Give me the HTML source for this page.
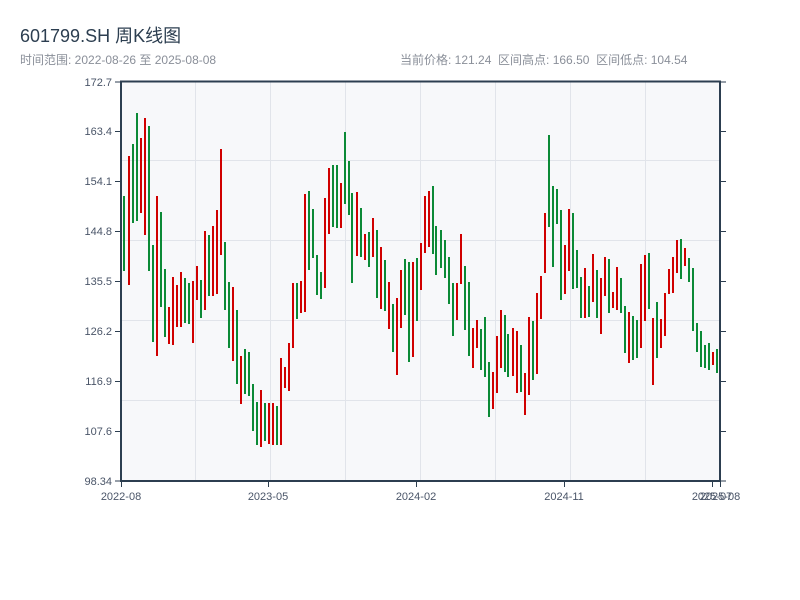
<!DOCTYPE html>
<html><head><meta charset="utf-8"><style>
body{margin:0;width:800px;height:600px;background:#fff;overflow:hidden;font-family:"Liberation Sans","Noto Sans CJK SC",sans-serif}
.t{position:absolute;left:20px;top:22px;font-size:18px;color:#2c3e50}
.s{position:absolute;top:51px;font-size:12px;color:#8a8f99}
svg{position:absolute;left:0;top:0}
</style></head><body>
<div class="t">601799.SH 周K线图</div>
<div class="s" style="left:20px">时间范围: 2022-08-26 至 2025-08-08</div>
<div class="s" style="left:400px">当前价格: 121.24&nbsp;&nbsp;区间高点: 166.50&nbsp;&nbsp;区间低点: 104.54</div>
<svg width="800" height="600" font-family="Liberation Sans, sans-serif" font-size="11" fill="#4a5568">
<rect x="121" y="81" width="599" height="400" fill="#f7f8fa"/>
<g stroke="#e1e4ea" stroke-width="1">
<line x1="195.5" y1="81" x2="195.5" y2="481"/><line x1="270.5" y1="81" x2="270.5" y2="481"/><line x1="345.5" y1="81" x2="345.5" y2="481"/><line x1="420.5" y1="81" x2="420.5" y2="481"/><line x1="495.5" y1="81" x2="495.5" y2="481"/><line x1="570.5" y1="81" x2="570.5" y2="481"/><line x1="645.5" y1="81" x2="645.5" y2="481"/>
<line x1="121" y1="160.5" x2="720" y2="160.5"/><line x1="121" y1="240.5" x2="720" y2="240.5"/><line x1="121" y1="320.5" x2="720" y2="320.5"/><line x1="121" y1="400.5" x2="720" y2="400.5"/>
</g>
<g fill="#0b8a36">
<rect x="123" y="196" width="2" height="75"/><rect x="132" y="144" width="2" height="79"/><rect x="136" y="113" width="2" height="108"/><rect x="148" y="126" width="2" height="145"/><rect x="152" y="245" width="2" height="97"/><rect x="160" y="212" width="2" height="95"/><rect x="164" y="269" width="2" height="68"/><rect x="184" y="278" width="2" height="45"/><rect x="188" y="283" width="2" height="41"/><rect x="200" y="280" width="2" height="38"/><rect x="208" y="235" width="2" height="61"/><rect x="224" y="242" width="2" height="68"/><rect x="228" y="282" width="2" height="66"/><rect x="236" y="310" width="2" height="74"/><rect x="244" y="349" width="2" height="45"/><rect x="248" y="352" width="2" height="44"/><rect x="252" y="384" width="2" height="47"/><rect x="256" y="402" width="2" height="43"/><rect x="264" y="403" width="2" height="38"/><rect x="276" y="406" width="2" height="39"/>
<rect x="296" y="283" width="2" height="36"/><rect x="308" y="191" width="2" height="79"/><rect x="312" y="209" width="2" height="49"/><rect x="316" y="255" width="2" height="40"/><rect x="320" y="272" width="2" height="27"/><rect x="332" y="165" width="2" height="62"/><rect x="336" y="165" width="2" height="63"/><rect x="344" y="132" width="2" height="72"/><rect x="348" y="161" width="2" height="54"/><rect x="351" y="193" width="2" height="90"/><rect x="360" y="208" width="2" height="49"/><rect x="368" y="232" width="2" height="35"/><rect x="376" y="230" width="2" height="68"/><rect x="384" y="260" width="2" height="51"/><rect x="392" y="304" width="2" height="48"/><rect x="404" y="259" width="2" height="56"/><rect x="408" y="262" width="2" height="100"/><rect x="416" y="258" width="2" height="63"/>
<rect x="432" y="186" width="2" height="68"/><rect x="435" y="226" width="2" height="49"/><rect x="440" y="230" width="2" height="38"/><rect x="444" y="240" width="2" height="38"/><rect x="448" y="257" width="2" height="47"/><rect x="452" y="283" width="2" height="53"/><rect x="464" y="266" width="2" height="64"/><rect x="468" y="282" width="2" height="74"/><rect x="480" y="329" width="2" height="41"/><rect x="484" y="317" width="2" height="60"/><rect x="488" y="362" width="2" height="55"/><rect x="504" y="315" width="2" height="57"/><rect x="507" y="334" width="2" height="43"/><rect x="520" y="345" width="2" height="47"/><rect x="532" y="321" width="2" height="59"/><rect x="548" y="135" width="2" height="92"/><rect x="552" y="186" width="2" height="81"/><rect x="556" y="189" width="2" height="35"/><rect x="560" y="210" width="2" height="90"/><rect x="572" y="213" width="2" height="76"/><rect x="576" y="250" width="2" height="38"/>
<rect x="580" y="277" width="2" height="41"/><rect x="588" y="286" width="2" height="31"/><rect x="596" y="270" width="2" height="48"/><rect x="608" y="259" width="2" height="54"/><rect x="620" y="278" width="2" height="35"/><rect x="624" y="306" width="2" height="47"/><rect x="632" y="316" width="2" height="44"/><rect x="636" y="320" width="2" height="38"/><rect x="648" y="253" width="2" height="56"/><rect x="656" y="302" width="2" height="56"/><rect x="680" y="239" width="2" height="40"/><rect x="688" y="258" width="2" height="24"/><rect x="692" y="268" width="2" height="63"/><rect x="696" y="323" width="2" height="29"/><rect x="700" y="331" width="2" height="36"/><rect x="704" y="345" width="2" height="23"/><rect x="708" y="343" width="2" height="27"/><rect x="716" y="349" width="2" height="24"/>
</g>
<g fill="#d00000">
<rect x="128" y="156" width="2" height="129"/><rect x="140" y="138" width="2" height="75"/><rect x="144" y="118" width="2" height="117"/><rect x="156" y="196" width="2" height="160"/><rect x="168" y="307" width="2" height="37"/><rect x="172" y="277" width="2" height="68"/><rect x="176" y="285" width="2" height="42"/><rect x="180" y="272" width="2" height="55"/><rect x="192" y="281" width="2" height="62"/><rect x="196" y="266" width="2" height="34"/><rect x="204" y="231" width="2" height="79"/><rect x="212" y="226" width="2" height="70"/><rect x="216" y="210" width="2" height="84"/><rect x="220" y="149" width="2" height="106"/><rect x="232" y="287" width="2" height="74"/><rect x="240" y="356" width="2" height="48"/><rect x="260" y="390" width="2" height="57"/><rect x="268" y="403" width="2" height="41"/><rect x="272" y="403" width="2" height="42"/><rect x="280" y="358" width="2" height="87"/>
<rect x="284" y="367" width="2" height="21"/><rect x="288" y="343" width="2" height="48"/><rect x="292" y="283" width="2" height="65"/><rect x="300" y="281" width="2" height="32"/><rect x="304" y="194" width="2" height="118"/><rect x="324" y="198" width="2" height="90"/><rect x="328" y="168" width="2" height="66"/><rect x="340" y="183" width="2" height="45"/><rect x="356" y="192" width="2" height="64"/><rect x="364" y="234" width="2" height="26"/><rect x="372" y="218" width="2" height="39"/><rect x="380" y="247" width="2" height="62"/><rect x="388" y="282" width="2" height="47"/><rect x="396" y="298" width="2" height="77"/><rect x="400" y="270" width="2" height="58"/><rect x="412" y="262" width="2" height="95"/><rect x="420" y="243" width="2" height="47"/><rect x="424" y="196" width="2" height="57"/><rect x="428" y="191" width="2" height="56"/>
<rect x="456" y="283" width="2" height="37"/><rect x="460" y="234" width="2" height="50"/><rect x="472" y="328" width="2" height="40"/><rect x="476" y="320" width="2" height="28"/><rect x="492" y="372" width="2" height="37"/><rect x="496" y="336" width="2" height="57"/><rect x="500" y="310" width="2" height="58"/><rect x="512" y="328" width="2" height="48"/><rect x="516" y="331" width="2" height="62"/><rect x="524" y="373" width="2" height="42"/><rect x="528" y="317" width="2" height="78"/><rect x="536" y="293" width="2" height="81"/><rect x="540" y="276" width="2" height="43"/><rect x="544" y="213" width="2" height="60"/><rect x="564" y="245" width="2" height="49"/><rect x="568" y="209" width="2" height="62"/>
<rect x="584" y="268" width="2" height="50"/><rect x="592" y="254" width="2" height="48"/><rect x="600" y="278" width="2" height="56"/><rect x="604" y="257" width="2" height="39"/><rect x="612" y="292" width="2" height="16"/><rect x="616" y="267" width="2" height="43"/><rect x="628" y="312" width="2" height="51"/><rect x="640" y="264" width="2" height="84"/><rect x="644" y="255" width="2" height="66"/><rect x="652" y="318" width="2" height="67"/><rect x="660" y="319" width="2" height="29"/><rect x="664" y="293" width="2" height="43"/><rect x="668" y="269" width="2" height="25"/><rect x="672" y="257" width="2" height="36"/><rect x="676" y="240" width="2" height="33"/><rect x="684" y="248" width="2" height="18"/><rect x="712" y="352" width="2" height="13"/><rect x="719" y="342" width="2" height="32"/>
</g>
<g stroke="#2c3e50" stroke-width="2" fill="none">
<line x1="121" y1="81" x2="121" y2="482"/><line x1="720" y1="81" x2="720" y2="482"/>
<line x1="120" y1="481" x2="721" y2="481"/><line x1="120" y1="81.5" x2="721" y2="81.5"/>
</g>
<g stroke="#2c3e50" stroke-width="1">
<line x1="115" y1="82" x2="121" y2="82"/><line x1="115" y1="131.5" x2="121" y2="131.5"/><line x1="115" y1="181.5" x2="121" y2="181.5"/><line x1="115" y1="231.5" x2="121" y2="231.5"/><line x1="115" y1="281.5" x2="121" y2="281.5"/><line x1="115" y1="331.5" x2="121" y2="331.5"/><line x1="115" y1="381.5" x2="121" y2="381.5"/><line x1="115" y1="431.5" x2="121" y2="431.5"/><line x1="115" y1="481" x2="121" y2="481"/>
<line x1="720" y1="82" x2="726" y2="82"/><line x1="720" y1="131.5" x2="726" y2="131.5"/><line x1="720" y1="181.5" x2="726" y2="181.5"/><line x1="720" y1="231.5" x2="726" y2="231.5"/><line x1="720" y1="281.5" x2="726" y2="281.5"/><line x1="720" y1="331.5" x2="726" y2="331.5"/><line x1="720" y1="381.5" x2="726" y2="381.5"/><line x1="720" y1="431.5" x2="726" y2="431.5"/><line x1="720" y1="481" x2="726" y2="481"/>
<line x1="121.5" y1="481" x2="121.5" y2="487"/><line x1="268.5" y1="481" x2="268.5" y2="487"/><line x1="416.5" y1="481" x2="416.5" y2="487"/><line x1="564.5" y1="481" x2="564.5" y2="487"/><line x1="712.5" y1="481" x2="712.5" y2="487"/><line x1="720.5" y1="481" x2="720.5" y2="487"/>
</g>
<g text-anchor="end">
<text x="112" y="86">172.7</text><text x="112" y="135">163.4</text><text x="112" y="185">154.1</text><text x="112" y="235">144.8</text><text x="112" y="285">135.5</text><text x="112" y="335">126.2</text><text x="112" y="385">116.9</text><text x="112" y="435">107.6</text><text x="112" y="485">98.34</text>
</g>
<g text-anchor="middle">
<text x="121" y="500">2022-08</text><text x="268" y="500">2023-05</text><text x="416" y="500">2024-02</text><text x="564" y="500">2024-11</text><text x="712" y="500">2025-07</text><text x="720" y="500">2025-08</text>
</g>
</svg>
</body></html>
